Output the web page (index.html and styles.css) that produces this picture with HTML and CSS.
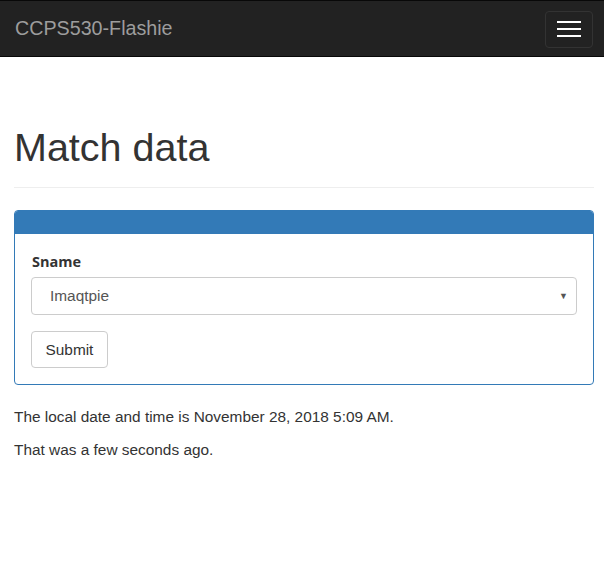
FILE: index.html
```html
<!DOCTYPE html>
<html>
<head>
<meta charset="utf-8">
<link rel="stylesheet" href="styles.css">
</head>
<body>
<nav class="navbar">
  <a class="brand" href="#">CCPS530-Flashie</a>
  <button class="toggle" type="button"><span class="bar"></span><span class="bar"></span><span class="bar"></span></button>
</nav>
<main class="container">
  <div class="page-header"><h1>Match data</h1></div>
  <div class="panel">
    <div class="panel-heading"></div>
    <div class="panel-body">
      <label class="label">Sname</label>
      <div class="select">
        <span class="select-value">Imaqtpie</span>
        <span class="caret">&#9660;</span>
      </div>
      <button class="btn" type="button">Submit</button>
    </div>
  </div>
  <p class="line">The local date and time is November 28, 2018 5:09 AM.</p>
  <p class="line">That was a few seconds ago.</p>
</main>
</body>
</html>
```
FILE: styles.css
```css
* { box-sizing: border-box; }
html, body { margin: 0; padding: 0; background: #fff; }
body { font-family: "Liberation Sans", Arial, sans-serif; font-size: 15.4px; color: #333; }
.navbar {
  height: 57px;
  background: #222;
  border-top: 1px solid #080808;
  border-bottom: 1px solid #080808;
  display: flex;
  align-items: center;
  justify-content: space-between;
  padding: 0 11px 0 15px;
}
.brand { color: #9d9d9d; font-size: 19.7px; text-decoration: none; }
.toggle {
  width: 48px; height: 37px;
  background: #222; border: 1px solid #333; border-radius: 4px;
  display: flex; flex-direction: column; align-items: center; justify-content: center; gap: 5px;
  padding: 0; margin-top: 1px;
}
.bar { display: block; width: 24px; height: 2px; background: #fff; }
.container { padding: 0 10px 0 14px; }
.page-header { margin: 69px 0 22px; padding-bottom: 18px; border-bottom: 1px solid #eee; }
h1 { margin: 0; font-weight: 400; font-size: 39.5px; line-height: 1.1; color: #333; }
.panel { border: 1px solid #337ab7; border-radius: 4px; }
.panel-heading { height: 23px; background: #337ab7; border-radius: 3px 3px 0 0; }
.panel-body { padding: 18px 16px 16px; display: flex; flex-direction: column; align-items: flex-start; }
.label { font-family: "Open Sans", sans-serif; font-weight: 700; font-size: 14.5px; color: #333; margin: 0 0 6px 1px; }
.select {
  width: 100%; height: 38px;
  border: 1px solid #ccc; border-radius: 4px;
  display: flex; align-items: center; justify-content: space-between;
  padding: 0 8px 0 18px; margin-bottom: 16px;
}
.select-value { color: #555; font-size: 15.4px; }
.caret { font-size: 9px; color: #555; }
.btn {
  font-family: "Liberation Sans", Arial, sans-serif; font-size: 15.4px; color: #333;
  background: #fff; border: 1px solid #ccc; border-radius: 4px;
  height: 37px; padding: 0 13.5px;
}
.line { margin: 21px 0 0; line-height: 22px; }
.line + .line { margin-top: 11px; }
```
